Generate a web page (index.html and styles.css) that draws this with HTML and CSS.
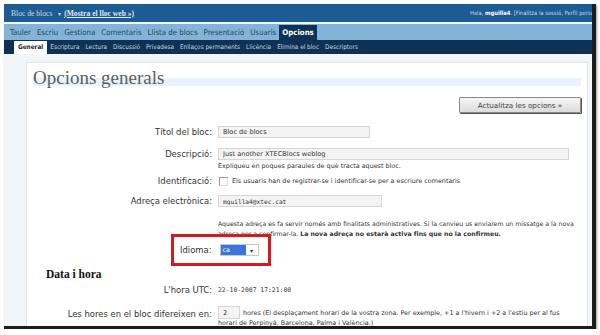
FILE: index.html
```html
<!DOCTYPE html>
<html lang="ca">
  <head>
    <meta charset="UTF-8" />
    <title>Opcions generals</title>
    <link rel="stylesheet" href="styles.css">
  </head>
  <body>
    <div class="shot">
      <header class="topbar">
        <span class="site">Bloc de blocs <span class="arrow">&#9662;</span> <a href="#">(Mostra el lloc web »)</a></span>
        <span class="user">Hola, <b>mguilla4</b>. [Finalitza la sessió, Perfil personal]</span>
      </header>
      <nav class="menu">
        <div class="menu-items">
          <a href="#">Tauler</a>
          <a href="#">Escriu</a>
          <a href="#">Gestiona</a>
          <a href="#">Comentaris</a>
          <a href="#">Llista de blocs</a>
          <a href="#">Presentació</a>
          <a href="#">Usuaris</a>
          <a href="#" class="active">Opcions</a>
        </div>
      </nav>
      <nav class="submenu">
        <div class="submenu-items">
          <a href="#" class="active">General</a>
          <a href="#">Escriptura</a>
          <a href="#">Lectura</a>
          <a href="#">Discussió</a>
          <a href="#">Privadesa</a>
          <a href="#">Enllaços permanents</a>
          <a href="#">Llicència</a>
          <a href="#">Elimina el bloc</a>
          <a href="#">Descriptors</a>
        </div>
      </nav>
      <main class="wrap">
        <section class="panel">
          <h2 class="title">Opcions generals</h2>
          <div class="actions">
            <button class="btn">Actualitza les opcions »</button>
          </div>
          <div class="row r-title">
            <label class="lbl">Títol del bloc:</label>
            <div class="field"><input class="inp w-title" value="Bloc de blocs"></div>
          </div>
          <div class="row r-desc">
            <label class="lbl">Descripció:</label>
            <div class="field">
              <input class="inp w-desc" value="Just another XTECBlocs weblog">
              <p class="help">Expliqueu en poques paraules de què tracta aquest bloc.</p>
            </div>
          </div>
          <div class="row r-ident">
            <label class="lbl">Identificació:</label>
            <div class="field check"><span class="box"></span> Els usuaris han de registrar-se i identificar-se per a escriure comentaris</div>
          </div>
          <div class="row r-mail">
            <label class="lbl">Adreça electrònica:</label>
            <div class="field">
              <input class="inp w-mail mono" value="mguilla4@xtec.cat">
              <p class="help note">Aquesta adreça es fa servir només amb finalitats administratives. Si la canvieu us enviarem un missatge a la nova adreça per a confirmar-la. <b>La nova adreça no estarà activa fins que no la confirmeu.</b></p>
            </div>
          </div>
          <div class="row r-lang">
            <div class="highlight">
              <label class="lbl">Idioma:</label>
              <div class="select"><span class="opt">ca</span><span class="drop">&#9662;</span></div>
            </div>
          </div>
          <h3 class="sub">Data i hora</h3>
          <div class="row r-utc">
            <label class="lbl">L'hora UTC:</label>
            <div class="field mono small">22-10-2007 17:21:00</div>
          </div>
          <div class="row r-off">
            <label class="lbl">Les hores en el bloc difereixen en:</label>
            <div class="field off">
              <input class="inp w-off" value="2"> hores (El desplaçament horari de la vostra zona. Per exemple, +1 a l'hivern i +2 a l'estiu per al fus horari de Perpinyà, Barcelona, Palma i València.)
            </div>
          </div>
        </section>
      </main>
    </div>
  </body>
</html>
```

FILE: styles.css
```css
/* base */
html {
  box-sizing: border-box;
  font-family: "DejaVu Sans", sans-serif;
}

*,
*:before,
*:after {
  box-sizing: inherit;
}

body {
  margin: 0;
  background: #fff;
}

a {
  color: inherit;
  text-decoration: none;
}

/* marc de la captura amb ombra */
.shot {
  margin: 4px 0 0 4px;
  width: 592px;
  height: 325px;
  overflow: hidden;
  border-right: 4px solid #1c1c1c;
  border-bottom: 3px solid #1c1c1c;
  box-shadow: 1px 1px 2px rgba(0, 0, 0, 0.4);
  background: #f3f6f9;
  display: flex;
  flex-direction: column;
}

/* barra superior */
.topbar {
  flex-shrink: 0;
  height: 18px;
  background: #1d5b93;
  color: #c9dcee;
  display: flex;
  align-items: center;
  padding: 0 0 0 7px;
  white-space: nowrap;
  font-family: "Liberation Serif", serif;
}

.topbar .site {
  font-size: 7.6px;
}

.topbar .site a {
  text-decoration: underline;
  font-weight: bold;
  color: #dfeaf5;
}

.topbar .arrow {
  font-size: 6px;
  margin: 0 1px 0 4px;
}

.topbar .user {
  margin-left: auto;
  width: 122px;
  overflow: hidden;
  font-family: "DejaVu Sans Condensed", sans-serif;
  font-size: 5.8px;
  color: #c4d6e8;
}

.topbar .user b {
  color: #fff;
}

/* menu principal */
.menu {
  flex-shrink: 0;
  height: 16px;
  margin-top: 2px;
  background: #83b4d8;
  padding-left: 3px;
  font-family: "DejaVu Sans Condensed", sans-serif;
  font-size: 7.8px;
  color: #22465f;
}

.menu-items {
  width: 309px;
  height: 100%;
  display: flex;
  justify-content: space-between;
  align-items: flex-end;
}

.menu a {
  padding: 0 3px 3px;
  white-space: nowrap;
}

.menu a.active {
  background: #0d3253;
  color: #fff;
  font-weight: bold;
  padding: 3px 3px 3px;
}

/* submenu */
.submenu {
  flex-shrink: 0;
  height: 14px;
  background: #0d3253;
  padding-left: 10px;
  font-family: "DejaVu Sans Condensed", sans-serif;
  font-size: 6.4px;
  color: #c6d6e4;
}

.submenu-items {
  width: 347px;
  height: 100%;
  display: flex;
  justify-content: space-between;
  align-items: flex-end;
}

.submenu a {
  padding: 0 3px 3px;
  white-space: nowrap;
}

.submenu a.active {
  background: #fff;
  color: #222;
  font-weight: bold;
  padding: 2px 4px 3px;
}

/* contingut */
.wrap {
  flex-grow: 1;
  padding: 8px 4px 0 22px;
}

.panel {
  height: 100%;
  background: #fff;
  border: 1px solid #e2e6ea;
  border-bottom: none;
  padding: 4px 6px 0 6px;
}

.title {
  margin: 0;
  height: 22px;
  font-family: "Liberation Serif", serif;
  font-weight: normal;
  font-size: 19px;
  color: #5e5e5e;
  line-height: 22px;
  background: linear-gradient(#fff 0, #fff 11px, #e6f2fc 11px, #e6f2fc 19px, #fff 19px);
}

.actions {
  display: flex;
  justify-content: flex-end;
  margin-top: 8px;
}

.btn {
  width: 122px;
  height: 16px;
  padding: 0;
  font-family: "DejaVu Sans", sans-serif;
  font-size: 7.2px;
  color: #444;
  background: linear-gradient(#f5f5f5, #dcdcdc);
  border: 1px solid #8a8a8a;
  border-radius: 1px;
  box-shadow: 1px 1px 0 #555;
}

/* files del formulari */
.row {
  display: flex;
  align-items: flex-start;
}

.lbl {
  width: 185px;
  text-align: right;
  padding-right: 6px;
  font-family: "DejaVu Sans Condensed", sans-serif;
  font-size: 9.4px;
  line-height: 12px;
  color: #333;
  flex-shrink: 0;
}

.field {
  font-size: 6.4px;
  color: #333;
}

.inp {
  display: block;
  height: 12px;
  border: 1px solid #d6d6d6;
  background: #f4f4f4;
  font-family: "DejaVu Sans", sans-serif;
  font-size: 6.6px;
  color: #333;
  padding: 0 4px;
}

.mono,
.inp.mono {
  font-family: "DejaVu Sans Mono", monospace;
}

.inp.mono {
  font-size: 6.2px;
}

.w-title { width: 152px; }
.w-desc { width: 351px; }
.w-mail { width: 164px; }

.help {
  margin: 2px 0 0;
  line-height: 9px;
}

.r-title { margin-top: 13px; }
.r-desc { margin-top: 10px; }
.r-ident { margin-top: 4px; }

.check {
  display: flex;
  align-items: center;
  height: 12px;
}

.box {
  width: 9px;
  height: 9px;
  border: 1px solid #999;
  border-right-color: #ddd;
  border-bottom-color: #ddd;
  margin: 0 4px 0 1px;
  background: #fff;
}

.r-mail { margin-top: 8px; }

.note {
  margin-top: 12px;
  width: 362px;
  font-size: 6.2px;
  line-height: 10px;
}

.r-lang {
  margin-top: -5px;
  padding-left: 138px;
}

.highlight {
  display: flex;
  align-items: center;
  width: 100px;
  height: 32px;
  border: 3px solid #d21a1f;
}

.highlight .lbl {
  width: auto;
  padding-left: 6px;
  padding-right: 8px;
}

.select {
  display: flex;
  align-items: center;
  height: 12px;
  border: 1px solid #c8c8c8;
  background: #fff;
}

.opt {
  width: 25px;
  height: 10px;
  background: #3a77d8;
  color: #fff;
  font-size: 6.4px;
  line-height: 10px;
  padding-left: 2px;
}

.drop {
  width: 12px;
  font-size: 6px;
  text-align: center;
  color: #333;
}

.sub {
  margin: 2px 0 0 13px;
  font-family: "Liberation Serif", serif;
  font-size: 11.5px;
  color: #111;
}

.r-utc { margin-top: 4px; }

.small {
  font-size: 6.4px;
  line-height: 12px;
}

.r-off { margin-top: 12px; }

.off {
  width: 362px;
  line-height: 10px;
}

.off .inp {
  display: inline-block;
  vertical-align: top;
  width: 22px;
  height: 13px;
  margin: -2px 1px -2px 0;
}
```
